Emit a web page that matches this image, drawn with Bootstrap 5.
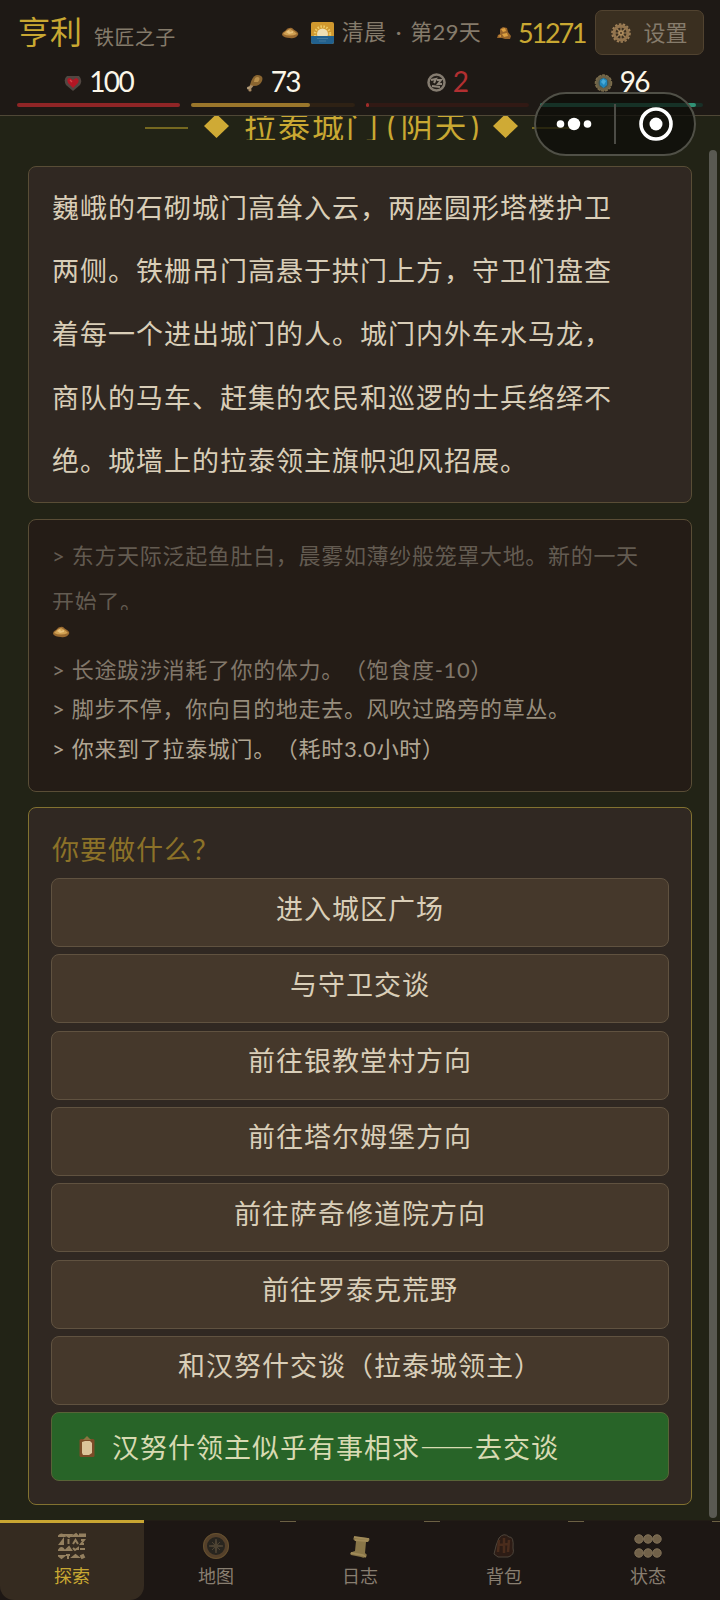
<!DOCTYPE html>
<html lang="zh-CN">
<head>
<meta charset="utf-8">
<meta name="viewport" content="width=device-width, initial-scale=1">
<title>拉泰城门</title>
<link href="https://cdn.jsdelivr.net/npm/bootstrap@5.3.0/dist/css/bootstrap.min.css" rel="stylesheet">
<style>
  :root{--gold:#c9a832;--line:#594d36;--ink:#d9ceb8;--dim:#857b6b}
  body{width:720px;height:1600px;overflow:hidden;background:#222316;color:var(--ink);
    font-family:Lato,"Noto Sans CJK SC",sans-serif;line-height:1;text-spacing-trim:space-all}
  svg{display:block;flex:none}
  .topbar{height:116px;background:#1e1915;border-bottom:1px solid #4f4736;padding:10px 17px 0 17px}
  .toprow{height:45px}
  .hero{font-size:32px;color:var(--gold);margin-left:1px;margin-top:-2px}
  .job{font-size:20px;letter-spacing:.4px;color:var(--dim);margin-left:12px;padding-top:8px}
  .when{font-size:22px;letter-spacing:.3px;color:var(--dim);margin-left:8px;margin-top:-2px;white-space:pre}
  .money{font-size:27px;letter-spacing:-2.2px;color:var(--gold);margin-left:6px;width:66px;white-space:nowrap}
  .setbtn{width:109px;height:45px;border:1px solid #514330;background:#3a2f20;border-radius:7px;color:var(--dim);font-size:22px;margin:0 -1px 0 11px;padding:0;gap:12px}
  .stats{gap:11px;margin-top:9px}
  .stats>div{flex:1 1 0;min-width:0}
  .stat-val{height:34px;font-size:28px;letter-spacing:-1.6px;color:#fbf6e8;gap:7px}
  .stat-val svg{margin-top:3px}
  .bar{height:4px;border-radius:2px;margin-top:5px;background:#2e2114}
  .bar i{display:block;height:4px;border-radius:2px}
  .place{height:24px;overflow:hidden;color:var(--gold)}
  .place b{font-weight:400;font-size:32px;letter-spacing:2px;white-space:nowrap;margin-top:-3px}
  .rule{width:43px;height:2px;background:#756820}
  .panel{margin:0 28px;border:1px solid var(--line);border-radius:8px;padding:0 23px}
  .story{margin-top:26px;height:337px;background:#302822;font-size:27px;letter-spacing:1px;line-height:63.2px;padding-top:9px}
  .log{margin-top:16px;height:273px;background:#241c16;font-size:22px;letter-spacing:.68px;padding-top:13px;white-space:nowrap}
  .log p{margin:0;line-height:39.3px}
  .log .first{color:#635b51;line-height:46px;height:77px;overflow:hidden}
  .ask{margin-top:15px;height:698px;border-color:#827230;background:#302822;padding:0 22px}
  .ask h2{font-size:27px;letter-spacing:1px;color:#8c7228;margin:0;height:70px;line-height:84px;padding-left:1px;font-weight:400}
  .choice{height:69px;border:1px solid #605240;border-radius:8px;background:#45382b;color:var(--ink);font-size:27px;letter-spacing:1px;width:100%;padding:0 0 9px;line-height:1}
  .quest{background:#286428;color:#d8dab2;padding:0 25px;border-color:#586337}
  .quest i{display:inline-block;width:56px;height:2px;background:currentColor;vertical-align:9px}
  .dash{font-family:"Noto Sans CJK SC",sans-serif}
  .tabs{position:absolute;left:0;right:0;top:1520px;height:80px;background:#1d1714}
  .tabx{width:144px;border-top:1px solid #211c15;padding-top:11px;color:#887e70;font-size:18px;gap:7px;position:relative}
  .tabx:not(.on)::after{content:"";position:absolute;right:-8px;top:0;width:16px;height:1px;background:#6b6044}
  .tabx.on{background:#352b20;border-top:3px solid #c9a632;padding-top:9px;color:var(--gold);border-radius:0 0 14px 14px}
  .caps{position:absolute;left:534px;top:92px;width:162px;height:64px;border:2px solid #505047;border-radius:32px;background:rgba(12,12,8,.72)}
  .thumb{position:absolute;left:709px;top:150px;width:8px;height:1368px;border-radius:4px;background:#595952}
</style>
</head>
<body>
<svg width="0" height="0" class="position-absolute"><defs>
  <symbol id="bread" viewBox="0 0 18 12"><path d="M1 8Q1 5 4 4Q7 0 11 1Q13 3 15 4Q18 6 17 8Q14 12 9 11Q3 11 1 8Z" fill="#9a6a30"/><path d="M2 7Q5 3 9 2Q14 4 16 7Q9 10 2 7Z" fill="#d0a052"/><path d="M5 5L8 3L9 5L12 4L12 6L8 7Z" fill="#e8c27c"/></symbol>
  <symbol id="cog" viewBox="0 0 20 20"><circle cx="10" cy="10" r="7" fill="none" stroke="#94754e" stroke-width="3"/><circle cx="10" cy="10" r="9" fill="none" stroke="#a08158" stroke-width="1.6" stroke-dasharray="2.4 1.6"/><path d="M10 4V16M4 10H16M6 6L14 14M14 6L6 14" stroke="#a08158" stroke-width="1.2"/><circle cx="10" cy="10" r="2.8" fill="#ae8c5c"/><circle cx="10" cy="10" r="1" fill="#453423"/></symbol>
</defs></svg>
<header class="topbar">
  <div class="toprow d-flex align-items-center">
    <span class="hero">亨利</span><span class="job">铁匠之子</span>
    <div class="d-flex align-items-center ms-auto">
      <svg width="18" height="12"><use href="#bread"/></svg>
      <svg style="margin-left:12px" width="23" height="22" viewBox="0 0 23 22"><rect width="23" height="22" rx="2" fill="#d0982e"/><circle cx="11.5" cy="12" r="7.5" fill="none" stroke="#eecb68" stroke-width="2.5" stroke-dasharray="1.5 1.5"/><circle cx="11.5" cy="12" r="5.5" fill="#eddfb4"/><path d="M0 14H23V20Q23 22 21 22H2Q0 22 0 20Z" fill="#22618e"/><path d="M6 16.500H17M8 19H15" stroke="#44799a"/></svg>
      <span class="when">清晨<span style="margin:0 8.500px 0 9.500px">·</span>第29天</span>
      <svg style="margin-left:15px" width="16" height="14" viewBox="0 0 16 14"><path d="M1 12L2 9L4 8L4 3L7 1L11 2L12 6L15 10L14 13H9L6 12Z" fill="#98642a"/><path d="M5 3L9 2L10 5L7 6ZM6 8L11 7L12 10L8 11ZM2 10L5 9L5 11Z" fill="#dda040"/></svg>
      <span class="money">51271</span>
      <button class="setbtn btn d-flex align-items-center justify-content-center"><svg width="20" height="20"><use href="#cog"/></svg>设置</button>
    </div>
  </div>
  <div class="stats d-flex">
    <div><div class="stat-val d-flex align-items-center justify-content-center"><svg width="18" height="18" viewBox="0 0 18 18"><path d="M9 17L2 11Q-1 5 3 2L9 2L15 2Q19 6 16 11Z" fill="#514641"/><path d="M9 14L4 9Q2 4 6 4L9 6L12 4Q16 5 14 9Z" fill="#b31624"/><path d="M6 6L8 8" stroke="#d8444a" stroke-width="1.3" fill="none"/></svg>100</div><div class="bar"><i style="width:100%;background:#8f2526"></i></div></div>
    <div><div class="stat-val d-flex align-items-center justify-content-center"><svg width="18" height="18" viewBox="0 0 18 18"><path d="M7 10L3 15" stroke="#a98d68" stroke-width="3"/><circle cx="2.500" cy="14" r="1.600" fill="#b39c78"/><circle cx="4" cy="16" r="1.600" fill="#a88962"/><path d="M4 11Q6 2 11 1Q18 1 16 7Q14 12 8 12Z" fill="#8a6530"/><path d="M8 8Q8 3 12 3Q15 4 12 8Z" fill="#b88f4c"/></svg>73</div><div class="bar"><i style="width:73%;background:#9a762b"></i></div></div>
    <div><div class="stat-val d-flex align-items-center justify-content-center" style="color:#b22f31"><svg width="19" height="19" viewBox="0 0 19 19"><circle cx="9.500" cy="9.500" r="8" fill="#241f1a" stroke="#857c70" stroke-width="2.500"/><path d="M4 7L9 6L7 10M10 7H14L11 11H15M5 13L13 14" stroke="#8f867a" stroke-width="2" fill="none"/></svg>2</div><div class="bar" style="background:#311914"><i style="width:2%;background:#a02c2a"></i></div></div>
    <div><div class="stat-val d-flex align-items-center justify-content-center"><svg width="19" height="19" viewBox="0 0 19 19"><circle cx="9.500" cy="10" r="8" fill="#6b6147" stroke="#7c6d4c" stroke-width="1.500" stroke-dasharray="3 1"/><circle cx="9.500" cy="10" r="5" fill="#3b5a60"/><path d="M9.500 5L13 7V12L9.500 15L6 12V7Z" fill="#2086ba"/><path d="M9 6L12 8L10 12L7 9Z" fill="#48abd8"/></svg>96</div><div class="bar" style="background:#183027"><i style="width:96%;background:#319175"></i></div></div>
  </div>
</header>
<main>
  <div class="place d-flex align-items-center justify-content-center">
    <span class="rule"></span><svg style="margin:-4px 15px 0 16px" width="25" height="24"><path d="M12.500 0L25 12L12.500 24L0 12Z" fill="#cfaa35"/></svg><b>拉泰城门<span style="margin:0 3px 0 7px">(</span>阴天<span style="margin-left:2px">)</span></b><svg style="margin:-4px 14px 0 12px" width="25" height="24"><path d="M12.500 0L25 12L12.500 24L0 12Z" fill="#cfaa35"/></svg><span class="rule"></span>
  </div>
  <section class="panel story">巍峨的石砌城门高耸入云，两座圆形塔楼护卫<br>两侧。铁栅吊门高悬于拱门上方，守卫们盘查<br>着每一个进出城门的人。城门内外车水马龙，<br>商队的马车、赶集的农民和巡逻的士兵络绎不<br>绝。城墙上的拉泰领主旗帜迎风招展。</section>
  <section class="panel log">
    <p class="first">&gt; 东方天际泛起鱼肚白，晨雾如薄纱般笼罩大地。新的一天<br>开始了。</p>
    <div style="height:40px;padding-top:16px"><svg width="18" height="12"><use href="#bread"/></svg></div>
    <p style="color:#81776a">&gt; 长途跋涉消耗了你的体力。（饱食度-10）</p>
    <p style="color:#978d7d">&gt; 脚步不停，你向目的地走去。风吹过路旁的草丛。</p>
    <p style="color:#b1a694">&gt; 你来到了拉泰城门。（耗时3.0小时）</p>
  </section>
  <section class="panel ask">
    <h2>你要做什么？</h2>
    <div class="d-flex flex-column" style="gap:7.34px">
      <button class="choice">进入城区广场</button>
      <button class="choice">与守卫交谈</button>
      <button class="choice">前往银教堂村方向</button>
      <button class="choice">前往塔尔姆堡方向</button>
      <button class="choice">前往萨奇修道院方向</button>
      <button class="choice">前往罗泰克荒野</button>
      <button class="choice">和汉努什交谈（拉泰城领主）</button>
      <button class="choice quest d-flex align-items-center"><svg width="20" height="22" viewBox="0 0 20 22" style="margin-right:15px"><rect x="2.500" y="3" width="15" height="18" rx="1.500" fill="#7c4c28"/><path d="M6 4L10 0L14 4Z" fill="#8d7440"/><path d="M5 6L8 5H13L15 7V17L12 19H6L5 17Z" fill="#dcc49b"/></svg><span>汉努什领主似乎有事相求<span class="dash">——</span>去交谈</span></button>
    </div>
  </section>
</main>
<nav class="tabs d-flex">
  <div class="tabx on d-flex flex-column align-items-center"><svg width="28" height="28" viewBox="0 0 28 28" fill="none" stroke="#94805f" stroke-width="2"><path d="M1 4Q3.500 1 6 4ZM8 3H13L11 5ZM15 4L18 2L20 4ZM22 2.500H27V4H22ZM2 12L5 8V12ZM10.500 7V12M15 12L17.500 8L20 12M23 8H26L23 12H26M1 18Q3.500 14 6 18ZM8 18L11 15L13 18ZM15 16L17 18L20 16V18M22 17H27M1 24L3.500 26L6 24ZM8 23H12M10 23V27M15 25L17.500 23L20 25ZM23 24L25 23L26 25L24 26Z"/></svg>探索</div>
  <div class="tabx d-flex flex-column align-items-center"><svg width="28" height="28" viewBox="0 0 28 28"><circle cx="14" cy="14" r="11" fill="#28251f" stroke="#54402a" stroke-width="4"/><circle cx="14" cy="14" r="12.500" fill="none" stroke="#66512f"/><path d="M14 7L15 13L21 14L15 15L14 21L13 15L7 14L13 13ZM10 10L18 18M18 10L10 18" fill="#554a38" stroke="#4d4333"/></svg>地图</div>
  <div class="tabx d-flex flex-column align-items-center"><svg width="28" height="28" viewBox="0 0 28 28"><path d="M8 5L22 6Q25 7 22 10L20 10L19 21L21 23Q19 27 15 25L5 23Q3 21 6 20L9 19L10 9Q6 8 8 5Z" fill="#897648"/><path d="M8 5L22 7L21 9L9 8M5 21L17 23L20 25" stroke="#a08a58" stroke-width="1.800" fill="none"/></svg>日志</div>
  <div class="tabx d-flex flex-column align-items-center"><svg width="28" height="28" viewBox="0 0 28 28"><path d="M9 6Q14 0 19 5Q24 4 23 16Q25 23 18 25H8L4 22Q6 12 9 6Z" fill="#2d1c15" stroke="#4d453b"/><path d="M9 8L8 20M14 6V21M19 8L18 20M8 13L19 12" stroke="#4a2c1c" stroke-width="2.500" fill="none"/></svg>背包</div>
  <div class="tabx d-flex flex-column align-items-center"><svg width="28" height="28" viewBox="0 0 28 28"><g fill="#716149" stroke="#84745a"><circle cx="5" cy="7" r="4.200"/><circle cx="14" cy="7" r="4.200"/><circle cx="23" cy="7" r="4.200"/><circle cx="5" cy="21" r="4.200"/><circle cx="14" cy="21" r="4.200"/><circle cx="23" cy="21" r="4.200"/></g></svg>状态</div>
</nav>
<div class="thumb"></div>
<div class="caps"><svg width="158" height="60" viewBox="0 0 158 60"><g fill="#fff"><circle cx="24.500" cy="30" r="3.800"/><circle cx="38" cy="30" r="6.200"/><circle cx="51.500" cy="30" r="3.800"/><circle cx="120" cy="30" r="6.500"/></g><circle cx="120" cy="30" r="15" fill="none" stroke="#fff" stroke-width="3.600"/><path d="M79 10V50" stroke="#4c4c46" stroke-width="2"/></svg></div>
<script src="https://cdn.jsdelivr.net/npm/bootstrap@5.3.0/dist/js/bootstrap.bundle.min.js"></script>
</body>
</html>
